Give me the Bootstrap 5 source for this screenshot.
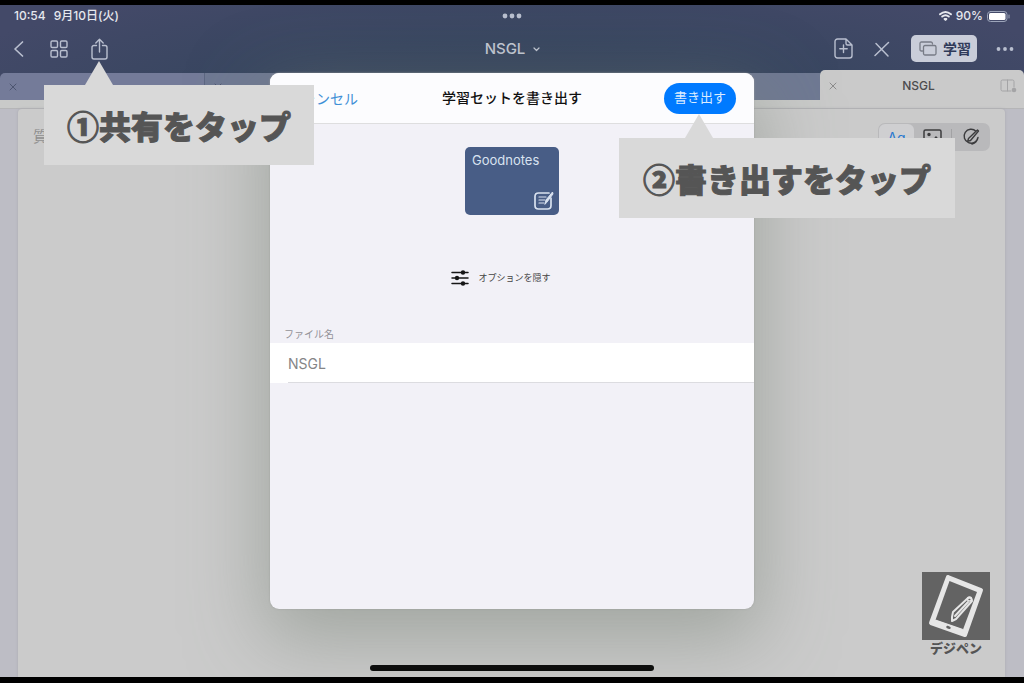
<!DOCTYPE html>
<html lang="ja">
<head>
<meta charset="utf-8">
<meta name="viewport" content="width=device-width, initial-scale=1">
<title>学習セットを書き出す</title>
<link rel="stylesheet" href="https://cdn.jsdelivr.net/npm/bootstrap@5.3.0/dist/css/bootstrap.min.css">
<style>
  body { font-family: "Inter", "Noto Sans CJK JP", sans-serif; background: #000; }
  svg { display: block; fill: none; stroke: currentColor; stroke-linecap: round; stroke-linejoin: round; }
  .dots { fill: #b9bfcf; stroke: none; }
  .screen { min-height: 100vh; border-top: 5px solid #000; border-bottom: 6px solid #000; background: #c8c8c8; overflow: hidden; }
  .app-header { background: radial-gradient(ellipse 60% 130% at 50% 100%, #33435a 0%, #384660 50%, transparent 100%), #434968; color: #b9bfcf; }
  .three-cols { display: grid; grid-template-columns: 1fr auto 1fr; align-items: center; }
  .status-line { height: 22px; padding: 0 14px; font-size: 12px; color: #e6e8ee; font-weight: 500; }
  .tool-line { height: 43px; padding: 0 10px 0 11px; }
  .icon-btn { border: 0; background: none; padding: 0; color: inherit; }
  .tools-left { gap: 23px; }
  .tools-right { gap: 19px; }
  .doc-title { font-size: 15px; font-weight: 500; color: #c3c8d4; padding-top: 2px; }
  .study-btn { background: #c9cdd9; color: #2f3a5a; border: 0; border-radius: 5px; height: 27px; padding: 0 6px 0 8px; gap: 6px; font-size: 14px; font-weight: 700; }
  .study-btn svg { stroke: #777b86; }
  .tab-line { height: 39px; background: linear-gradient(transparent 30px, #c9cac9 30px); border-bottom: 1px solid #b5b5b7; }
  .doc-tab { flex: 1; height: 27px; margin-top: 3px; padding: 0 8px; background: #6f7993; border: 0; border-right: 1px solid #5c6682; color: #4d5670; }
  .doc-tab:first-child { border-top-left-radius: 5px; background: #747b99; }
  .doc-tab.plain { border-right-color: #6f7993; }
  .doc-tab.current { flex-basis: 3px; height: 38px; margin-top: 0; padding: 0 7px 6px 9px; border: 0; border-radius: 5px 5px 0 0; background: #cacaca; color: #8b8b8b; }
  .current svg:last-child { stroke: #a4a4a6; }
  .current-name { font-size: 12px; font-weight: 500; color: #4c4c4e; }
  .workspace { background: #bdbdc5; padding: 0 19px 0 18px; }
  .paper { background: #cbcbcb; border-radius: 4px 4px 0 0; box-shadow: 0 0 3px #a9a9b0; padding: 14px 15px 6px; }
  .question { font-size: 15px; color: #8f8f8f; }
  .segments { height: 28px; background: #b9b9bb; border-radius: 7px; padding: 1px; color: #3c3c3e; }
  .segments button { width: 37px; }
  .segments .chosen { background: #cfcfd1; border-radius: 6px; color: #2878cf; width: 35px; font-size: 14px; }
  .segments i { width: 1px; height: 17px; background: #a2a2a4; }
  .brand-box { width: 68px; height: 68px; background: #636363; }
  .brand-box svg { stroke: #e6e6e6; }
  .brand-name { font-size: 13px; line-height: 17px; font-weight: 900; color: #555; }
  .home-bar { width: 284px; height: 6px; border-radius: 3px; background: #000; }
  .export-sheet { position: absolute; z-index: 2; top: 68px; bottom: 68px; left: 0; right: 0; margin: auto; width: 484px; max-width: 90%; background: #f2f1f7; border-radius: 9px; box-shadow: 0 24px 75px 6px rgba(120,130,118,.5), 0 0 2px #aaa; overflow: hidden; }
  .sheet-head { height: 51px; background: #fcfcfe; border-bottom: 1px solid #dededf; padding: 0 18px; font-size: 14px; }
  .sheet-title { font-size: 14px; font-weight: 500; color: #111; }
  .cancel { color: #3f8fd6; }
  .export-btn { background: #007aff; color: #dcecff; border: 0; border-radius: 16px; height: 31px; padding: 0 10px; font-size: 13px; }
  .cover { width: 94px; height: 68px; margin-top: 23px; padding: 5px 5px 5px 7px; border-radius: 5px; background: #485d86; color: #d9e2f0; font-size: 13px; line-height: 17px; }
  .options-btn { margin-top: 53px; padding-right: 22px; height: 20px; font-size: 9px; color: #444; gap: 9px; }
  .options-btn svg { stroke: #161616; }
  .field-label { margin-top: 37px; padding-left: 14px; font-size: 10px; line-height: 18px; color: #929297; }
  .name-field { height: 40px; border: 0; background: linear-gradient(#dcdce0, #dcdce0) 18px 39px / 100% 1px no-repeat #fff; padding: 0 18px; font-size: 14px; color: #858587; width: 100%; }
  .callout { position: absolute; z-index: 3; height: 80px; padding: 0 23px; background: #d9d9d9; color: #555; font-family: "Noto Sans CJK JP", sans-serif; font-size: 32px; font-weight: 900; white-space: nowrap; -webkit-text-stroke: 1px #555; }
  .callout::before { content: ""; position: absolute; bottom: 100%; width: 28px; height: 24px; background: inherit; clip-path: polygon(50% 0, 100% 100%, 0 100%); }
  .callout-share { left: 44px; top: 80px; }
  .callout-share::before { left: 41px; }
  .callout-export { left: calc(50% + 107px); top: 133px; padding: 0 24px; }
  .callout-export::before { left: 66px; }
</style>
</head>
<body>
<div class="screen position-relative d-flex flex-column">
  <header class="app-header">
    <div class="status-line three-cols">
      <div class="d-flex gap-2"><span>10:54</span><span>9月10日(火)</span></div>
      <svg class="dots" width="20" height="6" viewBox="0 0 20 6"><circle cx="3" cy="3" r="2.4"/><circle cx="10" cy="3" r="2.4"/><circle cx="17" cy="3" r="2.4"/></svg>
      <div class="d-flex justify-content-end align-items-center gap-1">
        <svg width="13" height="10" viewBox="0 0 13 10" stroke-width="1.9"><path d="M1 3.3Q6.500-1.300 12 3.300M3.200 5.600Q6.500 3 9.800 5.600"/><path d="M5.600 8h1.800l-.9.900z" fill="currentColor"/></svg>
        <span>90%</span>
        <svg width="23" height="11" viewBox="0 0 23 11"><rect x=".5" y=".5" width="19.500" height="10" rx="3" stroke="#9da5ba"/><rect x="2" y="2" width="16.500" height="7" rx="1.500" fill="#fff" stroke="none"/><path d="M22 4v3" stroke="#9da5ba"/></svg>
      </div>
    </div>
    <div class="tool-line three-cols">
      <div class="d-flex align-items-center tools-left">
        <button class="icon-btn" aria-label="戻る"><svg width="16" height="20" viewBox="0 0 16 20" stroke-width="1.700"><path d="M11.500 3L4 10l7.500 7"/></svg></button>
        <button class="icon-btn" aria-label="一覧"><svg width="18" height="18" viewBox="0 0 18 18" stroke-width="1.400"><rect x="1" y="1" width="6.500" height="6.500" rx="1.200"/><rect x="10.500" y="1" width="6.500" height="6.500" rx="1.200"/><rect x="1" y="10.500" width="6.500" height="6.500" rx="1.200"/><rect x="10.500" y="10.500" width="6.500" height="6.500" rx="1.200"/></svg></button>
        <button class="icon-btn" aria-label="共有"><svg width="17" height="22" viewBox="0 0 17 22" stroke-width="1.400"><path d="M5.500 7.500H3a2 2 0 0 0-2 2V19a2 2 0 0 0 2 2h11a2 2 0 0 0 2-2V9.500a2 2 0 0 0-2-2h-2.500M8.500 14V1.500M4.800 5l3.700-3.700L12.200 5"/></svg></button>
      </div>
      <button class="icon-btn doc-title d-flex align-items-center gap-2">NSGL <svg width="7" height="5" viewBox="0 0 7 5" stroke-width="1.200"><path d="M1 1l2.500 2.500L6 1"/></svg></button>
      <div class="d-flex justify-content-end align-items-center tools-right">
        <button class="icon-btn" aria-label="ページを追加"><svg width="19" height="21" viewBox="0 0 19 21" stroke-width="1.400"><path d="M12 1H3.500A2.500 2.500 0 0 0 1 3.500v14A2.500 2.500 0 0 0 3.500 20h12a2.500 2.500 0 0 0 2.500-2.500V7zM12 1v4.500Q12 7 13.500 7H18M9.500 7v7.500M5.800 10.800h7.400"/></svg></button>
        <button class="icon-btn" aria-label="編集を終了"><svg width="20" height="18" viewBox="0 0 20 18" stroke-width="1.500"><path d="M4 3.500L16 16M16.500 2.500L3 15.500"/></svg></button>
        <button class="study-btn d-flex align-items-center"><svg width="18" height="15" viewBox="0 0 18 15" stroke-width="1.300"><path d="M3.500 10H2.500Q1 10 1 8.500v-6Q1 1 2.500 1h9.500Q13.500 1 13.500 3"/><rect x="4.500" y="4.500" width="12.500" height="9.500" rx="1.500"/></svg>学習</button>
        <button class="icon-btn" aria-label="その他"><svg class="dots" width="18" height="6" viewBox="0 0 18 6"><circle cx="2.500" cy="3" r="1.900"/><circle cx="9" cy="3" r="1.900"/><circle cx="15.500" cy="3" r="1.900"/></svg></button>
      </div>
    </div>
    <nav class="tab-line d-flex align-items-start" aria-label="書類タブ">
      <button class="doc-tab d-flex align-items-center" aria-label="タブ1"><svg width="10" height="8" viewBox="0 0 10 8"><path d="M2 1l6 6M8 1L2 7"/></svg></button>
      <button class="doc-tab d-flex align-items-center" aria-label="タブ2"><svg width="10" height="8" viewBox="0 0 10 8"><path d="M2 1l6 6M8 1L2 7"/></svg></button>
      <button class="doc-tab" aria-label="タブ3"></button>
      <button class="doc-tab plain" aria-label="タブ4"></button>
      <button class="doc-tab current d-flex align-items-center justify-content-between"><svg width="8" height="8" viewBox="0 0 8 8"><path d="M1 1l6 6M7 1L1 7"/></svg><span class="current-name">NSGL</span><svg width="17" height="14" viewBox="0 0 17 14"><path d="M11 12H2.500Q1 12 1 10.500v-8Q1 1 2.500 1h10Q14 1 14 2.500V8M7.500 1v11"/><circle cx="14" cy="11" r="2.300" fill="#a4a4a6" stroke="none"/></svg></button>
    </nav>
  </header>

  <main class="workspace flex-grow-1 d-flex flex-column">
    <div class="paper flex-grow-1 d-flex flex-column">
      <div class="d-flex justify-content-between align-items-center">
        <span class="question">質問</span>
        <div class="segments d-flex align-items-center">
          <button class="icon-btn chosen h-100">Ag</button>
          <button class="icon-btn d-flex justify-content-center" aria-label="画像"><svg width="19" height="16" viewBox="0 0 19 16" stroke-width="1.500"><rect x="1" y="1" width="17" height="14" rx="1.500"/><circle cx="6" cy="5.500" r="1" fill="currentColor"/><path d="M2 14l5-4 3 2 3-4 4 5"/></svg></button>
          <i></i>
          <button class="icon-btn d-flex justify-content-center" aria-label="手書き"><svg width="18" height="18" viewBox="0 0 18 18" stroke-width="1.400"><path d="M14 3.200A7 7 0 1 0 16 9.500M14 3.200l1.500-1.200 1 1-8 9.500-2.800.8.800-2.800zM16 9.500q-1 5-6 6.500"/></svg></button>
        </div>
      </div>
      <div class="align-self-end text-center mt-auto">
        <div class="brand-box"><svg width="68" height="68" viewBox="0 0 68 68"><path d="M26 5L59 18 43 63 9 51z" fill="#e6e6e6" stroke-width="4"/><path d="M27.500 9L55 20 41 57.500 13.500 48z" fill="#636363" stroke="none"/><path d="M13.500 47.500L41 57l-1.500 4.500L12 51z" fill="#e6e6e6" stroke="none"/><path d="M30 45l1-5 15-14q4-1 4 3L34 47l-4 2zM33 44L46 30" stroke-width="2"/><circle cx="47.500" cy="27" r="2" stroke-width="1.500"/><path d="M25.500 55l2 .8" stroke="#636363" stroke-width="2.500"/></svg></div>
        <div class="brand-name">デジペン</div>
      </div>
      <div class="home-bar align-self-center mt-2"></div>
    </div>
  </main>

  <section class="export-sheet" role="dialog" aria-labelledby="sheetTitle">
    <div class="sheet-head three-cols">
      <button class="icon-btn cancel text-start">キャンセル</button>
      <h1 class="sheet-title m-0" id="sheetTitle">学習セットを書き出す</h1>
      <div class="text-end"><button class="export-btn">書き出す</button></div>
    </div>
    <div class="cover mx-auto d-flex flex-column justify-content-between">
      <span>Goodnotes</span>
      <svg class="align-self-end" width="20" height="19" viewBox="0 0 20 19" stroke-width="1.700"><path d="M15 2H4.500Q1 2 1 5.500v9Q1 18 4.500 18h9q3.500 0 3.500-3.500V7"/><path d="M5 6h7M5 9h6M5 12h5" stroke-width="1.200"/><path d="M11 13l1-4 6.500-8 .5 2-6 8z" fill="currentColor" stroke-width="1"/></svg>
    </div>
    <button class="icon-btn options-btn d-flex align-items-center mx-auto"><svg width="18" height="16" viewBox="0 0 18 16" stroke-width="1.500"><path d="M1 2.500h16M1 8h16M1 13.500h16"/><g fill="#161616" stroke="none"><circle cx="12" cy="2.500" r="2.200"/><circle cx="6" cy="8" r="2.200"/><circle cx="12" cy="13.500" r="2.200"/></g></svg>オプションを隠す</button>
    <label class="field-label d-block" for="fileName">ファイル名</label>
    <input class="name-field d-block" id="fileName" type="text" value="NSGL">
  </section>

  <div class="callout callout-share d-flex align-items-center">①共有をタップ</div>
  <div class="callout callout-export d-flex align-items-center">②書き出すをタップ</div>
</div>
<script src="https://cdn.jsdelivr.net/npm/bootstrap@5.3.0/dist/js/bootstrap.bundle.min.js"></script>
</body>
</html>
